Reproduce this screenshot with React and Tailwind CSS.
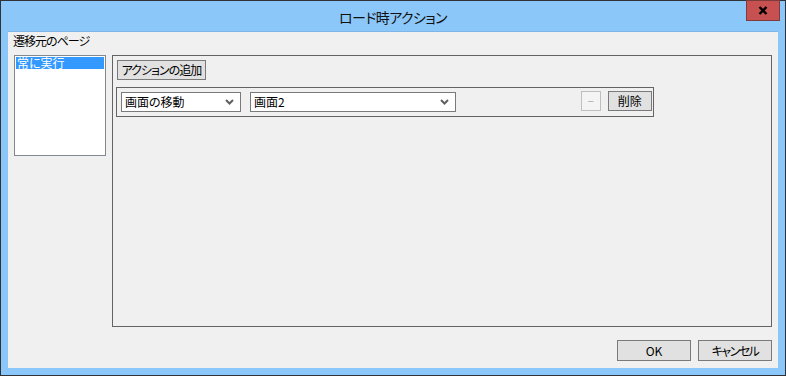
import React from 'react'

const font = "font-['Meiryo_UI','Noto_Sans_CJK_JP',sans-serif] [font-feature-settings:'palt']"

const Chevron = () => (
  <svg width="9" height="6" viewBox="0 0 9 6" className="shrink-0">
    <path d="M1 1 L4.5 4.5 L8 1" fill="none" stroke="#5f5f5f" strokeWidth="2" />
  </svg>
)

const Combo = ({ value, width }) => (
  <div className={`${width} h-[20px] bg-white border border-[#7a7a7a] flex items-center justify-between pl-[3px] pr-[6px]`}>
    <span className="text-[12px] leading-none text-black whitespace-nowrap">{value}</span>
    <Chevron />
  </div>
)

const Button = ({ children, className = '' }) => (
  <div className={`h-[20px] bg-[#e1e1e1] border border-[#7a7a7a] flex items-center justify-center text-[12px] leading-none text-black whitespace-nowrap ${className}`}>
    {children}
  </div>
)

const App = () => {
  return (
    <div className={`w-[786px] h-[376px] border border-[#2f3338] bg-[#8bc7f9] flex flex-col ${font}`}>
      {/* title bar */}
      <div className="h-[30px] flex relative">
        <div className="flex-1 flex items-center justify-center pt-[2px] text-[14px] tracking-[-0.6px] text-[#111]">ロード時アクション</div>
        <div className="absolute right-[5px] top-[-1px] w-[34px] h-[21px] bg-[#c75050] border border-[#7d3b3b] flex items-center justify-center">
          <svg width="10" height="9" viewBox="0 0 10 9">
            <path d="M1.5 1 L8.5 8 M8.5 1 L1.5 8" stroke="#000" strokeWidth="2.4" />
          </svg>
        </div>
      </div>

      {/* client area */}
      <div className="mx-[7px] h-[337px] bg-[#f0f0f0] border-t border-[#7fb5e6] flex flex-col">
        <div className="pl-[5px] pt-[1px] h-[23px] text-[12px] tracking-[-1px] text-black leading-[16px]">遷移元のページ</div>

        <div className="flex pl-[6px] pr-[6px] gap-[6px]">
          {/* list box */}
          <div className="w-[92px] h-[101px] bg-white border border-[#828790] p-[1px]">
            <div className="h-[12px] bg-[#3399ff] text-white text-[12px] leading-[12px] pl-[1px]">常に実行</div>
          </div>

          {/* action panel */}
          <div className="w-[661px] h-[272px] border border-[#646464] flex flex-col items-start pt-[4px] pl-[4px]">
            <Button className="w-[89px] tracking-[-1px]">アクションの追加</Button>

            <div className="mt-[7px] ml-[-1px] w-[538px] h-[30px] border border-[#646464] flex items-center pl-[4px] pr-[1px]">
              <Combo value="画面の移動" width="w-[120px]" />
              <div className="w-[9px]" />
              <Combo value="画面2" width="w-[206px]" />
              <div className="flex-1" />
              <div className="w-[20px] h-[20px] mb-[2px] border border-[#bfbfbf] bg-[#f4f4f4] flex items-center justify-center text-[11px] text-[#a8a8a8]">−</div>
              <Button className="w-[44px] ml-[7px] mb-[2px]">削除</Button>
            </div>
          </div>
        </div>

        <div className="flex justify-end gap-[7px] pr-[6px] mt-[13px]">
          <Button className="w-[74px] h-[21px]">OK</Button>
          <Button className="w-[74px] h-[21px] tracking-[-1.5px]">キャンセル</Button>
        </div>
      </div>
      <div className="flex-1" />
    </div>
  )
}

export default App
